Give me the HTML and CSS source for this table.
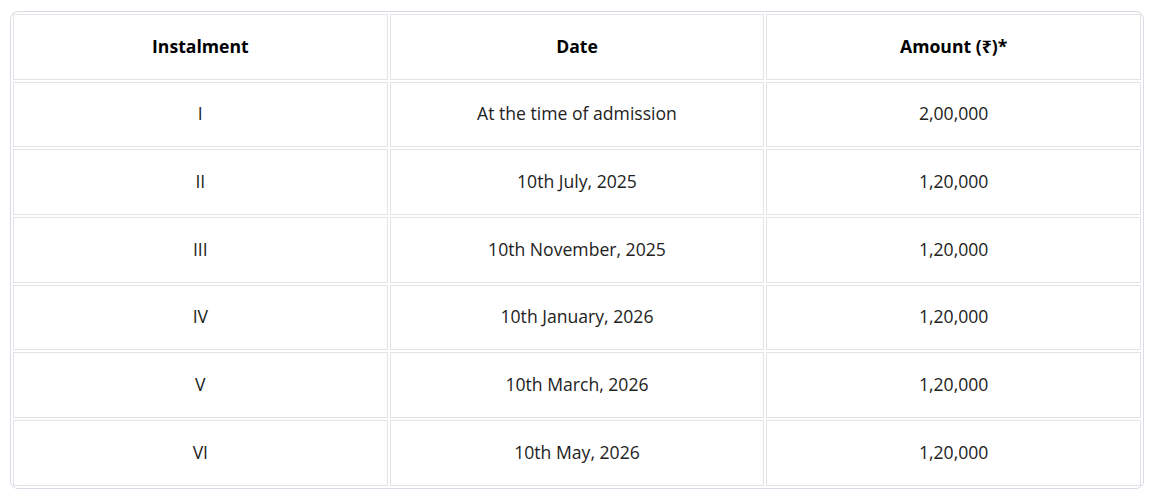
FILE: index.html
```html
<!DOCTYPE html>
<html lang="en">
<head>
<meta charset="utf-8">
<title>Instalments</title>
<link rel="stylesheet" href="styles.css">
</head>
<body>
<div class="table-wrap">
  <table class="fee-table">
    <thead>
      <tr><th>Instalment</th><th>Date</th><th>Amount (₹)*</th></tr>
    </thead>
    <tbody>
      <tr><td>I</td><td>At the time of admission</td><td>2,00,000</td></tr>
      <tr><td>II</td><td>10th July, 2025</td><td>1,20,000</td></tr>
      <tr><td>III</td><td>10th November, 2025</td><td>1,20,000</td></tr>
      <tr><td>IV</td><td>10th January, 2026</td><td>1,20,000</td></tr>
      <tr><td>V</td><td>10th March, 2026</td><td>1,20,000</td></tr>
      <tr><td>VI</td><td>10th May, 2026</td><td>1,20,000</td></tr>
    </tbody>
  </table>
</div>
</body>
</html>
```
FILE: styles.css
```css
html, body {
  margin: 0;
  background: #ffffff;
}
body {
  padding: 11px 11px 0 10px;
  font-family: "Open Sans", "Noto Sans", sans-serif;
  font-size: 17.6px;
  color: #222222;
}
.table-wrap {
  width: 1134px;
  box-sizing: border-box;
  border: 1px solid #dcdae6;
  border-radius: 8px;
  overflow: hidden;
}
.fee-table {
  width: 100%;
  border-collapse: separate;
  border-spacing: 2px;
  table-layout: fixed;
}
.fee-table th,
.fee-table td {
  border: 1px solid #e3e3e3;
  text-align: center;
  padding: 18.5px 10px 21.2px;
  line-height: 24px;
}
.fee-table th {
  font-weight: 700;
  font-size: 17.6px;
  color: #000000;
}
```
